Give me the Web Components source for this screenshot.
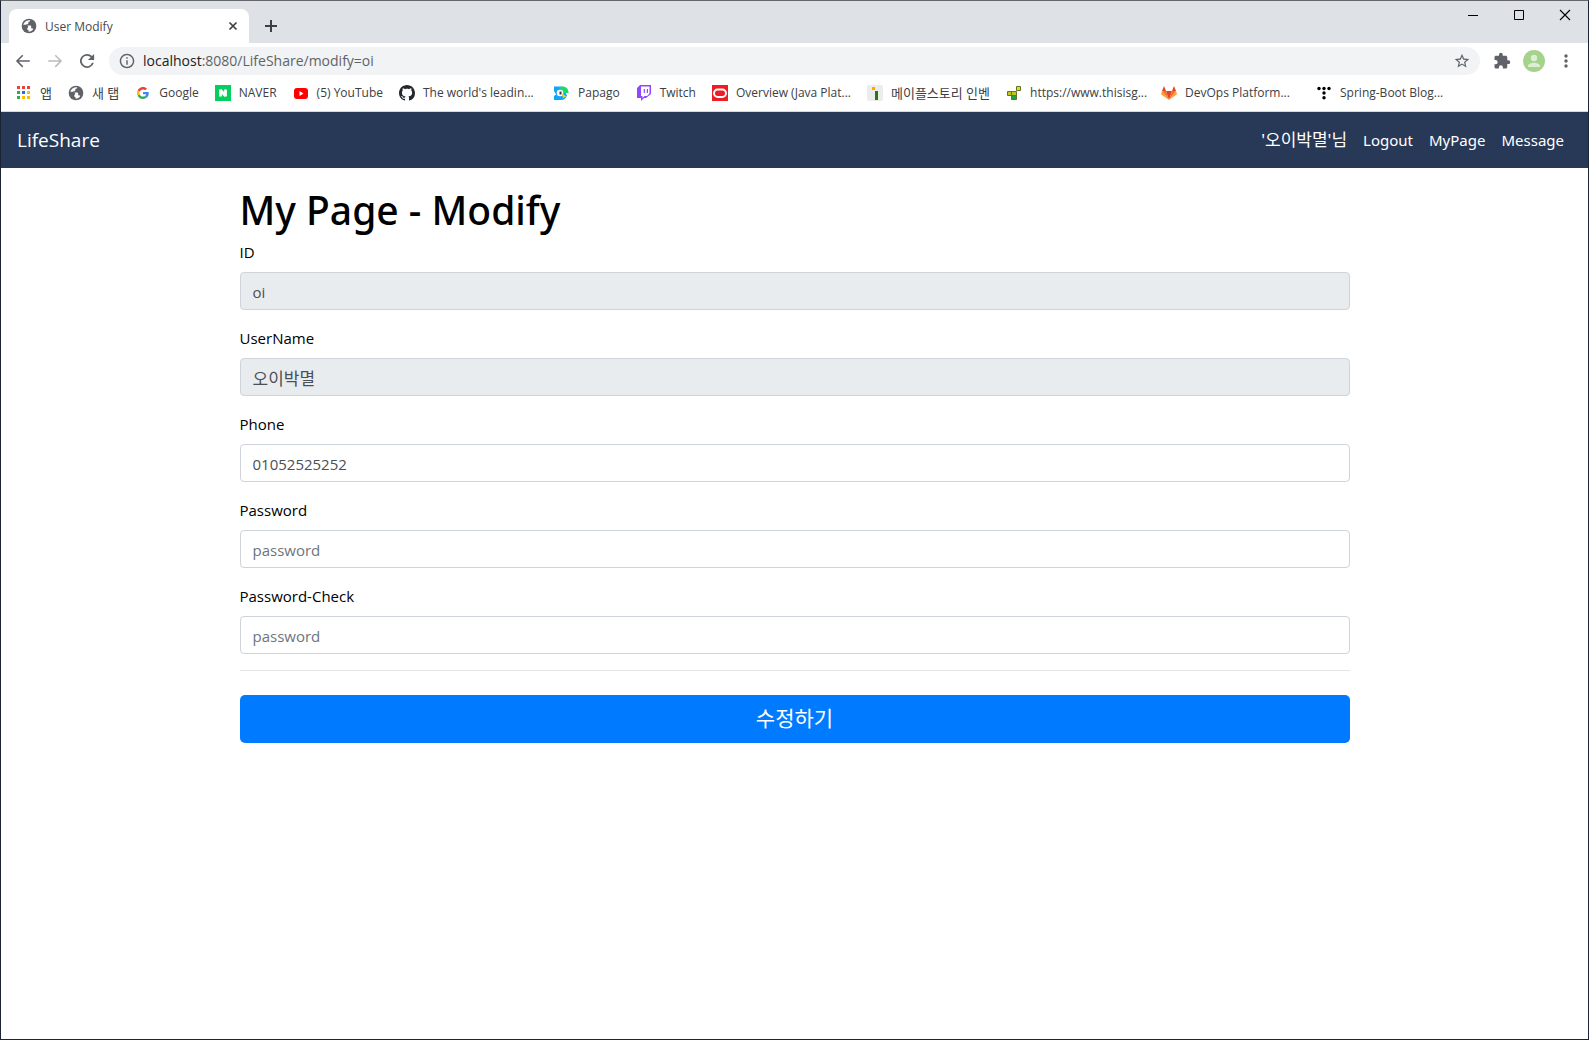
<!DOCTYPE html>
<html lang="ko">
<head>
<meta charset="utf-8">
<title>User Modify</title>
<style>
  body { margin: 0; font-family: "Open Sans", "Noto Sans CJK KR", sans-serif; color: #000; background: #fff; }
</style>
</head>
<body>
<browser-window>
  <tab-strip slot="chrome">User Modify</tab-strip>
  <address-bar slot="chrome" host="localhost" path=":8080/LifeShare/modify=oi"></address-bar>
  <bookmark-bar slot="chrome">
    <bookmark-link icon="apps" korean>앱</bookmark-link>
    <bookmark-link icon="globe" korean>새 탭</bookmark-link>
    <bookmark-link icon="google">Google</bookmark-link>
    <bookmark-link icon="naver">NAVER</bookmark-link>
    <bookmark-link icon="youtube">(5) YouTube</bookmark-link>
    <bookmark-link icon="github" clipped>The world's leadin...</bookmark-link>
    <bookmark-link icon="papago">Papago</bookmark-link>
    <bookmark-link icon="twitch">Twitch</bookmark-link>
    <bookmark-link icon="oracle" clipped>Overview (Java Plat...</bookmark-link>
    <bookmark-link icon="inven" korean>메이플스토리 인벤</bookmark-link>
    <bookmark-link icon="tig" clipped>https://www.thisisg...</bookmark-link>
    <bookmark-link icon="gitlab" clipped>DevOps Platform...</bookmark-link>
    <bookmark-link icon="tistory" clipped>Spring-Boot Blog...</bookmark-link>
  </bookmark-bar>
  <site-nav brand="LifeShare">
    <nav-link korean>'오이박멸'님</nav-link>
    <nav-link>Logout</nav-link>
    <nav-link>MyPage</nav-link>
    <nav-link>Message</nav-link>
  </site-nav>
  <modify-form>
    <span slot="title">My Page - Modify</span>
    <form-field value="oi" readonly>ID</form-field>
    <form-field value="오이박멸" readonly korean>UserName</form-field>
    <form-field value="01052525252">Phone</form-field>
    <form-field type="password" placeholder="password">Password</form-field>
    <form-field type="password" placeholder="password">Password-Check</form-field>
    <span slot="submit">수정하기</span>
  </modify-form>
</browser-window>

<script>
const ICONS = {
  globe: ['0 0 24 24', '<path fill="#5f6368" d="M12 1a11 11 0 1 0 0 22 11 11 0 0 0 0-22z"/><path fill="#fff" d="M3.4 10.2C4.200 6.400 7.600 3.300 11.500 3.200L13.800 3.500C13.800 5 12.600 6 11 6v2c0 .7-.6 1.200-1.300 1.200H8v2h6.200c.6 0 1 .5 1 1v3h1.200c.9 0 1.700.5 2 1.400-1.500 2.500-4.200 4.100-7 4.100v-2.200c-1.200 0-2.200-1-2.200-2.200v-1.200z"/><path fill="#5f6368" d="M3 10h6l2 3-2 3-2.500-1z"/>'],
  close: ['0 0 16 16', '<path d="M4.500 4.500l7 7M11.500 4.500l-7 7" stroke="#3c4043" stroke-width="1.700"/>'],
  plus: ['0 0 16 16', '<path d="M8 2v12M2 8h12" stroke="#3c4043" stroke-width="2"/>'],
  min: ['0 0 16 16', '<path d="M3 8.500h10" stroke="#000"/>'],
  max: ['0 0 16 16', '<path d="M3.500 3.500h9v9h-9z" stroke="#000" fill="none"/>'],
  quit: ['0 0 16 16', '<path d="M3 3l10 10M13 3L3 13" stroke="#000" stroke-width="1.100"/>'],
  back: ['0 0 24 24', '<path fill="#5f6368" d="M21 10.900H6.400l6-6L11 3.500 2.500 12l8.500 8.500 1.400-1.400-6-6H21z"/>'],
  forward: ['0 0 24 24', '<path fill="#babcbe" d="M3 10.900h14.600l-6-6L13 3.500l8.500 8.500-8.500 8.500-1.400-1.400 6-6H3z"/>'],
  reload: ['0 0 24 24', '<path fill="#5f6368" d="M18.700 5.300A9.400 9.400 0 1 0 21.100 14.400h-2.500A7 7 0 1 1 17 7l-3.800 3.800H21.500V2.500z"/>'],
  info: ['1 1 22 22', '<path fill="#5f6368" d="M11 7h2v2h-2zm0 4h2v6h-2zm1-9C6.480 2 2 6.480 2 12s4.480 10 10 10 10-4.480 10-10S17.520 2 12 2zm0 18c-4.410 0-8-3.590-8-8s3.590-8 8-8 8 3.590 8 8-3.590 8-8 8z"/>'],
  star: ['1 1 22 22', '<path fill="#5f6368" d="M22 9.240l-7.190-.62L12 2 9.190 8.630 2 9.240l5.460 4.730L5.820 21 12 17.270 18.180 21l-1.630-7.030L22 9.240zM12 15.400l-3.760 2.270 1-4.280-3.320-2.880 4.380-.38L12 6.100l1.710 4.040 4.380.38-3.320 2.880 1 4.280L12 15.400z"/>'],
  puzzle: ['0 0 24 24', '<path fill="#5f6368" d="M20.500 11H19V7c0-1.100-.9-2-2-2h-4V3.500a2.500 2.500 0 0 0-5 0V5H4c-1.100 0-2 .9-2 2v3.800h1.500a2.700 2.700 0 0 1 0 5.400H2V20c0 1.100.9 2 2 2h3.800v-1.500a2.700 2.700 0 0 1 5.400 0V22H17c1.100 0 2-.9 2-2v-4h1.500a2.500 2.500 0 0 0 0-5z"/>'],
  avatar: ['0 0 22 22', '<circle cx="11" cy="11" r="11" fill="#a5d38c"/><circle cx="11" cy="8" r="3.200" fill="#dcefd2"/><path fill="#dcefd2" d="M5 17v-1.300c0-2 4-3 6-3s6 1 6 3V17z"/>'],
  menu: ['0 0 18 18', '<g fill="#5f6368"><circle cx="9" cy="4" r="1.700"/><circle cx="9" cy="9" r="1.700"/><circle cx="9" cy="14" r="1.700"/></g>'],
  apps: ['0 0 16 16', '<path fill="#ea4335" d="M1 1h3v3H1zM6 1h3v3H6zM11 1h3v3h-3z"/><path fill="#34a853" d="M1 6h3v3H1zM1 11h3v3H1z"/><path fill="#1a73e8" d="M6 6h3v3H6z"/><path fill="#fbbc04" d="M11 6h3v3h-3zM6 11h3v3H6zM11 11h3v3h-3z"/>'],
  google: ['-8 -8 64 64', '<path fill="#EA4335" d="M24 9.500c3.540 0 6.710 1.220 9.210 3.600l6.850-6.850C35.900 2.380 30.470 0 24 0 14.620 0 6.510 5.380 2.560 13.220l7.980 6.190C12.430 13.720 17.740 9.500 24 9.500z"/><path fill="#4285F4" d="M46.980 24.550c0-1.570-.15-3.090-.38-4.550H24v9.020h12.940c-.58 2.960-2.260 5.480-4.780 7.180l7.730 6c4.510-4.180 7.090-10.360 7.090-17.650z"/><path fill="#FBBC05" d="M10.530 28.590c-.48-1.450-.76-2.990-.76-4.590s.27-3.140.76-4.590l-7.980-6.190C.92 16.460 0 20.120 0 24s.92 7.540 2.560 10.780l7.970-6.190z"/><path fill="#34A853" d="M24 48c6.480 0 11.930-2.130 15.890-5.810l-7.730-6c-2.150 1.450-4.920 2.300-8.160 2.300-6.260 0-11.570-4.220-13.470-9.910l-7.980 6.190C6.510 42.620 14.620 48 24 48z"/>'],
  naver: ['0 0 16 16', '<path fill="#03cf5d" d="M0 0h16v16H0z"/><path d="M5.500 4.500v7M10.500 4.500v7M5.500 5l5 6" stroke="#fff" stroke-width="2.800"/>'],
  youtube: ['0 0 16 16', '<rect x="1" y="3" width="14" height="11" rx="3" fill="#f00"/><path fill="#fff" d="M6.500 6v5l4-2.500z"/>'],
  github: ['0 0 16 16', '<path fill="#24292e" d="M8 0C3.580 0 0 3.580 0 8c0 3.540 2.290 6.530 5.470 7.590.4.070.55-.17.55-.38 0-.19-.01-.82-.01-1.490-2.010.37-2.530-.49-2.690-.94-.09-.23-.48-.94-.82-1.130-.28-.15-.68-.52-.01-.53.63-.01 1.080.58 1.230.82.72 1.210 1.870.87 2.330.66.07-.52.28-.87.51-1.070-1.780-.2-3.640-.89-3.640-3.950 0-.87.31-1.590.82-2.150-.08-.2-.36-1.020.08-2.120 0 0 .67-.21 2.200.82.64-.18 1.320-.27 2-.27s1.360.09 2 .27c1.530-1.040 2.200-.82 2.200-.82.44 1.100.16 1.920.08 2.120.51.56.82 1.270.82 2.150 0 3.070-1.870 3.750-3.650 3.950.29.25.54.73.54 1.480 0 1.070-.01 1.930-.01 2.200 0 .21.15.46.55.38A8.010 8.010 0 0 0 16 8c0-4.420-3.580-8-8-8z"/>'],
  papago: ['0 0 16 16', '<path fill="#12a5f4" d="M0 1.500h8l5 9A6.500 6.500 0 0 1 7 15H0v-4l2-1.500L0 6z"/><path fill="#1fd66f" d="M5 2.500C10-.5 15 3 14.500 8H9L6.500 4.500z"/><circle cx="6" cy="8" r="3.300" fill="#fff"/><path fill="#293b55" d="M5.500 6.500h2v3h-2z"/><path fill="#ffcd1c" d="M8 8.500l4.500 3L9 13z"/>'],
  twitch: ['0 0 16 16', '<path fill="#9146ff" d="M4 0h11v9l-5 4H8l-3 3v-3H1V3z"/><path fill="#fff" d="M5 1.500h8.500v7L11 11H8.500l-2 2v-2H5z"/><path fill="#9146ff" d="M7.700 4h1.200v4H7.700zM10.800 4H12v4h-1.200z"/>'],
  oracle: ['0 0 16 16', '<path fill="#ee1c25" d="M0 0h16v16H0z"/><rect x="2" y="4.500" width="12" height="7.500" rx="3.700" fill="none" stroke="#fff" stroke-width="2"/>'],
  inven: ['0 0 16 16', '<rect width="16" height="16" rx="2" fill="#ececec"/><path fill="#ffa800" d="M5 2h3v3H5z"/><path fill="#26780f" d="M8 6h3v9H8z"/>'],
  tig: ['0 0 16 16', '<g stroke="#65702c" stroke-width="1"><path fill="#e4df10" d="M10.500 1.500h4v4h-4z"/><path fill="#bdc61d" d="M1.500 6.500h4v4h-4zM5.500 6.500h5v4h-5z"/><path fill="#21a340" d="M5.500 10.500h5v4h-5z"/></g>'],
  gitlab: ['0 0 16 16', '<path fill="#e24329" d="M8 15L5 6h6z"/><path fill="#fc6d26" d="M8 15L5 6H1l7 9zm0 0l3-9h4z"/><path fill="#fca326" d="M1 6L0 9.200 8 15zm14 0l1 3.200L8 15z"/><path fill="#e24329" d="M1 6l2-5 2 5zm14 0l-2-5-2 5z"/>'],
  tistory: ['0 0 16 16', '<g fill="#000"><circle cx="3" cy="3.500" r="1.700"/><circle cx="8" cy="3.500" r="1.700"/><circle cx="13" cy="3.500" r="1.700"/><circle cx="8" cy="8" r="1.700"/><circle cx="8" cy="12.700" r="1.700"/></g>']
};

function define(name, render) {
  customElements.define(name, class extends HTMLElement {
    connectedCallback() {
      if (this.shadowRoot) return;
      const template = document.createElement('template');
      template.innerHTML = '<style>*{box-sizing:border-box}button{font:inherit;border:0;padding:0;background:none;color:inherit}a{color:inherit;text-decoration:none}</style>' + render(this);
      this.attachShadow({ mode: 'open' }).append(template.content.cloneNode(true));
    }
  });
}

define('ui-icon', el => {
  const [box, art] = ICONS[el.getAttribute('name')];
  return `<style>:host{display:block;flex:none;width:var(--size,16px);height:var(--size,16px)}svg{display:block;width:100%;height:100%}</style>
    <svg viewBox="${box}" fill="none" aria-hidden="true">${art}</svg>`;
});

define('browser-window', () => `
  <style>
    :host{display:flex;flex-direction:column;box-sizing:border-box;min-height:100vh;border:1px solid #1a2433;border-top-color:#64676b;background:#fff}
    header{border-bottom:1px solid #d5d8dc}
  </style>
  <header><slot name="chrome"></slot></header>
  <slot></slot>`);

define('tab-strip', () => `
  <style>
    :host{display:flex;height:42px;background:#dee1e6;font-size:12px;color:#45494d}
    .tab{display:flex;align-items:center;gap:8px;width:240px;margin:8px 0 0 8px;padding:0 8px 0 12px;background:#fff;border-radius:8px 8px 0 0}
    .title{flex:1}
    .new{display:flex;align-items:center;padding:8px 14px 0}
    .controls{display:flex;margin-left:auto;height:28px}
    .controls button{width:46px;display:grid;place-items:center}
  </style>
  <div class="tab"><ui-icon name="globe"></ui-icon><span class="title"><slot></slot></span><button aria-label="Close tab"><ui-icon name="close"></ui-icon></button></div>
  <button class="new" aria-label="New tab"><ui-icon name="plus"></ui-icon></button>
  <div class="controls">
    <button aria-label="Minimize"><ui-icon name="min"></ui-icon></button>
    <button aria-label="Maximize"><ui-icon name="max"></ui-icon></button>
    <button aria-label="Close"><ui-icon name="quit"></ui-icon></button>
  </div>`);

define('address-bar', el => `
  <style>
    :host{display:flex;align-items:center;height:36px;padding:0 13px;gap:14px;--size:18px}
    .url{--size:16px;flex:1;display:flex;align-items:center;height:28px;margin:0 -1px;padding:0 10px;border-radius:14px;background:#f1f3f4;font-size:14px;color:#5f6368;line-height:28px}
    .url span{flex:1;padding-left:8px}
    b{font-weight:400;color:#202124}
    .profile{--size:22px;margin:0 -2px}
  </style>
  <button aria-label="Back"><ui-icon name="back"></ui-icon></button>
  <button aria-label="Forward"><ui-icon name="forward"></ui-icon></button>
  <button aria-label="Reload"><ui-icon name="reload"></ui-icon></button>
  <div class="url"><ui-icon name="info"></ui-icon><span><b>${el.getAttribute('host')}</b>${el.getAttribute('path')}</span><button aria-label="Bookmark"><ui-icon name="star"></ui-icon></button></div>
  <button aria-label="Extensions"><ui-icon name="puzzle"></ui-icon></button>
  <button class="profile" aria-label="Profile"><ui-icon name="avatar"></ui-icon></button>
  <button aria-label="Menu"><ui-icon name="menu"></ui-icon></button>`);

define('bookmark-bar', () => `
  <style>:host{display:flex;align-items:center;gap:16px;height:32px;padding:0 15px 4px;box-sizing:border-box}</style>
  <slot></slot>`);

define('bookmark-link', el => `
  <style>
    :host{display:block;flex:none;font-size:12px;line-height:20px;color:#3c4043;white-space:nowrap}
    :host([korean]){font-size:13px}
    :host([clipped]) span{width:115px}
    a{display:flex;align-items:center;gap:8px}
  </style>
  <a href="#"><ui-icon name="${el.getAttribute('icon')}"></ui-icon><span><slot></slot></span></a>`);

define('site-nav', el => `
  <style>
    :host{display:block;background:#273957;color:#fff}
    nav{display:flex;align-items:center;justify-content:space-between;height:56px;padding:0 16px}
    .brand{font-size:19px;line-height:30px}
    .links{display:flex;font-family:"Noto Sans","Noto Sans CJK KR",sans-serif}
  </style>
  <nav><a class="brand" href="#">${el.getAttribute('brand')}</a><div class="links"><slot></slot></div></nav>`);

define('nav-link', () => `
  <style>
    :host{display:block;font-family:"Noto Sans","Noto Sans CJK KR",sans-serif;font-size:15px;line-height:24px}
    :host([korean]){font-size:17px}
    a{display:block;padding:8px}
  </style>
  <a href="#"><slot></slot></a>`);

define('modify-form', () => `
  <style>
    :host{display:block;box-sizing:border-box;width:100%;max-width:1140px;margin:0 auto;padding:16px 15px}
    h1{margin:0 0 6px;padding-top:2px;font-family:"Noto Sans","Open Sans",sans-serif;font-size:39px;line-height:48px;font-weight:500}
    form{display:flex;flex-direction:column;gap:16px}
    hr{width:100%;height:1px;margin:0 0 8px;border:0;background:#e5e5e5}
    button{height:48px;padding-bottom:2px;border-radius:5px;background:#007bff;color:#fff;font-size:21px;line-height:30px}
  </style>
  <h1><slot name="title"></slot></h1>
  <form><slot></slot><hr><button type="button"><slot name="submit"></slot></button></form>`);

define('form-field', el => `
  <style>
    :host{display:flex;flex-direction:column;gap:8px;font-size:15px}
    label{line-height:24px}
    input{width:100%;height:38px;padding:7px 12px 5px;border:1px solid #ced4da;border-radius:4px;background:#fff;color:#495057;font:inherit;line-height:24px;outline:0}
    input::placeholder{color:#6c757d;opacity:1}
    input:read-only{background:#e9ecef}
    :host([korean]) input{padding:6px 12px;font-size:17px}
  </style>
  <label for="field"><slot></slot></label>
  <input id="field" type="${el.getAttribute('type') || 'text'}" value="${el.getAttribute('value') || ''}" placeholder="${el.getAttribute('placeholder') || ''}" ${el.hasAttribute('readonly') ? 'readonly' : ''}>`);
</script>
</body>
</html>
